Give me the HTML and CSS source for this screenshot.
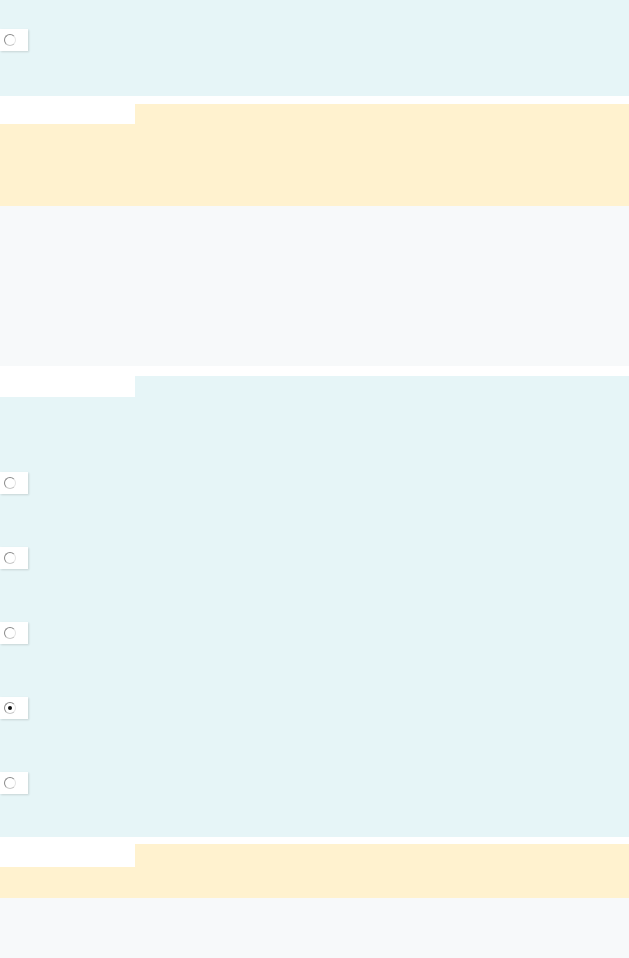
FILE: index.html
```html
<!DOCTYPE html>
<html lang="en">
<head>
    <meta charset="UTF-8">
    <meta name="viewport" content="width=device-width, initial-scale=1.0">
    <title>Survey</title>
    <link rel="stylesheet" href="styles.css">
</head>
<body>
    <div class="section cyan first">
        <label class="choice"><input type="radio" name="q0"></label>
    </div>
    <div class="section yellow y1">
        <div class="tab"></div>
    </div>
    <div class="section gray g1"></div>
    <div class="section cyan c2">
        <div class="tab t2"></div>
        <div class="choices">
            <label class="choice"><input type="radio" name="q1"></label>
            <label class="choice"><input type="radio" name="q1"></label>
            <label class="choice"><input type="radio" name="q1"></label>
            <label class="choice"><input type="radio" name="q1" checked></label>
            <label class="choice"><input type="radio" name="q1"></label>
        </div>
    </div>
    <div class="section yellow y2">
        <div class="tab t3"></div>
    </div>
    <div class="section gray g2"></div>
</body>
</html>
```

FILE: styles.css
```css
body {
    margin: 0;
    font-family: "Liberation Sans", Arial, sans-serif;
    background-color: #ffffff;
}
.section {
    display: flex;
    flex-direction: column;
    align-items: flex-start;
}
.cyan {
    background-color: #e6f5f7;
}
.yellow {
    background-color: #fff2cf;
}
.gray {
    background-color: #f7f9fa;
}
.first {
    height: 96px;
    padding-top: 29px;
    box-sizing: border-box;
}
.y1 {
    margin-top: 8px;
    height: 102px;
}
.tab {
    width: 135px;
    height: 20px;
    background-color: #ffffff;
}
.g1 {
    height: 160px;
}
.c2 {
    margin-top: 10px;
    height: 461px;
}
.t2 {
    height: 21px;
}
.choices {
    display: flex;
    flex-direction: column;
    gap: 53px;
    margin-top: 75px;
}
.y2 {
    margin-top: 7px;
    height: 54px;
}
.t3 {
    height: 23px;
}
.g2 {
    height: 60px;
}
.choice {
    display: flex;
    width: 28px;
    height: 22px;
    box-sizing: border-box;
    padding: 5px 0 0 4px;
    background-color: #ffffff;
    box-shadow: 1px 1px 2px rgba(0, 0, 0, 0.14);
}
.choice input {
    appearance: none;
    -webkit-appearance: none;
    display: flex;
    align-items: center;
    justify-content: center;
    width: 12px;
    height: 12px;
    margin: 0;
    border: 1.5px solid #8a8a8a;
    border-right-color: #e4e4e4;
    border-bottom-color: #c8c8c8;
    border-radius: 50%;
    box-sizing: border-box;
    background-color: #ffffff;
}
.choice input:checked::after {
    content: "";
    width: 4px;
    height: 4px;
    border-radius: 50%;
    background-color: #111111;
}
```
